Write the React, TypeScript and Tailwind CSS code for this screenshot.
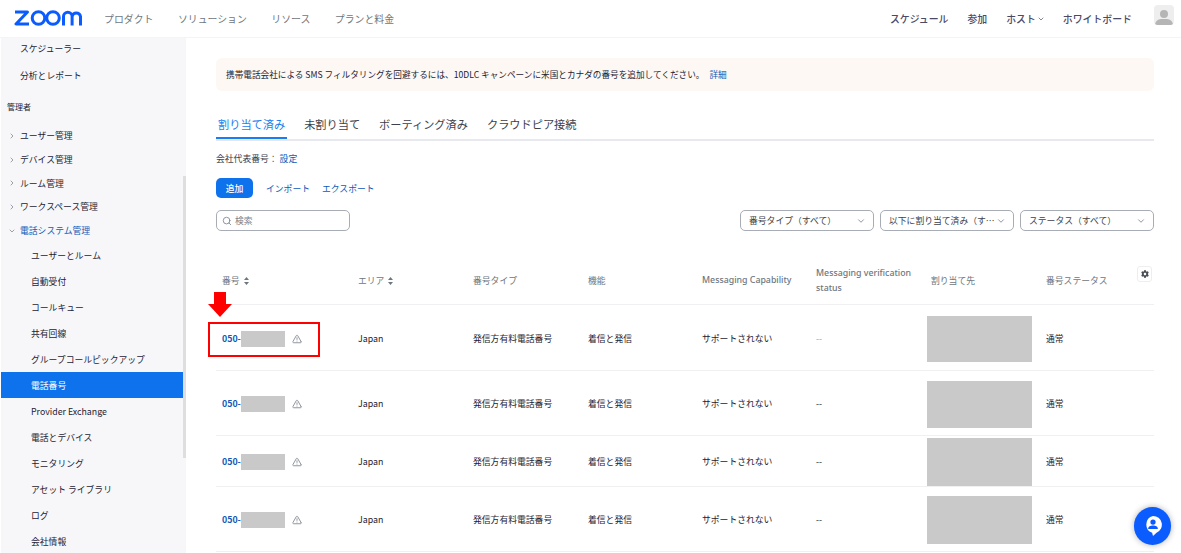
import { AlertTriangle, ChevronDown, ChevronRight, Search } from "lucide-react";
import { FaCog } from "react-icons/fa";

const jp = "font-['Noto_Sans_CJK_JP','Noto_Sans',sans-serif]";

const topLinks = ["プロダクト", "ソリューション", "リソース", "プランと料金"];

const rows = [
  { h: "h-[66px]", box: "h-[46px]", dash: "text-[#98a0a9]" },
  { h: "h-[65px]", box: "h-[47px]", dash: "text-[#131619]" },
  { h: "h-[51px]", box: "h-[48px]", dash: "text-[#131619]" },
  { h: "h-[65px]", box: "h-[48px]", dash: "text-[#131619]" },
];

const cols = "grid grid-cols-[136px_115px_115px_114px_114px_115px_115px_1fr]";

function ZoomLogo() {
  return (
    <svg width="68" height="16" viewBox="0 0 68 16" fill="none" stroke="#0b5cff" strokeWidth="3" className="-mt-[1px]">
      <path d="M1 2h12.500L2 14h13" strokeLinejoin="round" />
      <circle cx="24.500" cy="8" r="6.300" />
      <circle cx="39" cy="8" r="6.300" />
      <path d="M49.500 15.500V6.500a4.300 4.300 0 0 1 8.600 0v9M58.100 6.500a4.300 4.300 0 0 1 8.400 0v9" />
    </svg>
  );
}

function SortCarets() {
  return (
    <svg width="5" height="8" viewBox="0 0 5 8" fill="#6e7680" className="ml-[4px]">
      <path d="M2.500 0L5 3H0zM2.500 8L0 5h5z" />
    </svg>
  );
}

function Side({ label, active = false }: { label: string; active?: boolean }) {
  return (
    <div className={`flex h-[26px] items-center pl-[30px] ${active ? "bg-[#0e72ed] text-white" : "text-[#232333]"}`}>
      {label}
    </div>
  );
}

function Group({ label, open = false }: { label: string; open?: boolean }) {
  return (
    <div className={`flex h-[23.7px] items-center pl-[7px] ${open ? "text-[#0e5ab8]" : "text-[#232333]"}`}>
      {open ? (
        <ChevronDown size={8} className="mr-[4px] text-[#6e7680]" />
      ) : (
        <ChevronRight size={8} className="mr-[4px] text-[#6e7680]" />
      )}
      {label}
    </div>
  );
}

function Picker({ label }: { label: string }) {
  return (
    <div className="flex h-[21px] w-[134px] items-center justify-between rounded-[5px] border border-[#a8adb5] pl-[8px] pr-[7px] whitespace-nowrap text-[#3d424a]">
      <span>{label}</span>
      <ChevronDown size={10} className="shrink-0 text-[#7b828b]" />
    </div>
  );
}

export default function App() {
  return (
    <div className={`relative h-[553px] w-[1181px] overflow-hidden bg-white text-[8.8px] ${jp}`}>
      <header className="flex h-[38px] items-center justify-between border-b border-[#f4f4f6] pl-[14px] pr-[7px]">
        <div className="flex items-center">
          <ZoomLogo />
          <nav className="mt-[1px] ml-[22px] flex gap-[24.500px] text-[9.900px] text-[#6e7680]">
            {topLinks.map((link) => (
              <span key={link}>{link}</span>
            ))}
          </nav>
        </div>
        <div className="flex items-center text-[9.900px] font-medium text-[#4a4a68]">
          <span className="mt-[1px]">スケジュール</span>
          <span className="mt-[1px] ml-[19px]">参加</span>
          <span className="mt-[1px] ml-[19px] flex items-center">
            ホスト
            <ChevronDown size={8} className="ml-[1px]" />
          </span>
          <span className="mt-[1px] ml-[18px]">ホワイトボード</span>
          <div className="-mt-[6px] ml-[22px] flex h-[20px] w-[20px] flex-col items-center justify-end overflow-hidden rounded-[4px] bg-[#eeeeee]">
            <div className="h-[8px] w-[8px] rounded-full bg-[#b5b5b5]" />
            <div className="mt-[1px] h-[6px] w-[18px] rounded-t-[6px] bg-[#b5b5b5]" />
          </div>
        </div>
      </header>

      <div className="flex">
        <aside className="relative ml-[1px] h-[515px] w-[185px] shrink-0 bg-[#f7f7fa] pt-[1px]">
          <div className="flex h-[20px] items-center pl-[19px] text-[#232333]">スケジューラー</div>
          <div className="flex h-[34px] items-center pl-[19px] text-[#232333]">分析とレポート</div>
          <div className="flex h-[28px] items-center pl-[6px] text-[8px] text-[#232333]">管理者</div>
          <div className="h-[3px]" />
          <Group label="ユーザー管理" />
          <Group label="デバイス管理" />
          <Group label="ルーム管理" />
          <Group label="ワークスペース管理" />
          <Group label="電話システム管理" open />
          {["ユーザーとルーム", "自動受付", "コールキュー", "共有回線", "グループコールピックアップ"].map((label) => (
            <Side key={label} label={label} />
          ))}
          <Side label="電話番号" active />
          {["Provider Exchange", "電話とデバイス", "モニタリング", "アセット ライブラリ", "ログ", "会社情報"].map((label) => (
            <Side key={label} label={label} />
          ))}
          <div className="absolute right-0 top-[138px] h-[282px] w-[3px] bg-[#dedede]" />
        </aside>

        <main className="ml-[30px] w-[938px] pt-[20px]">
          <div className="flex h-[33px] items-center rounded-[6px] bg-[#fdf8f3] pl-[10px] text-[8.650px] text-[#232333]">
            携帯電話会社による SMS フィルタリングを回避するには、10DLC キャンペーンに米国とカナダの番号を追加してください。
            <span className="ml-[5px] text-[#0e5ab8]">詳細</span>
          </div>

          <div className="mt-[20px] flex h-[30px] items-start gap-[19px] border-b-2 border-[#e8e9ee] px-[2px] text-[11.200px] leading-[26px] text-[#3d424a]">
            <span className="relative text-[#1a7ef0]">
              割り当て済み
              <span className="absolute -bottom-[2px] -left-[2px] -right-[2px] h-[2px] bg-[#1a7ef0]" />
            </span>
            <span>未割り当て</span>
            <span>ボーティング済み</span>
            <span>クラウドピア接続</span>
          </div>

          <div className="mt-[10px] flex h-[16px] items-center text-[#3d424a]">
            会社代表番号：
            <span className="ml-[2px] text-[#0e5ab8]">設定</span>
          </div>

          <div className="mt-[11px] flex items-center text-[#0e5ab8]">
            <button className="flex h-[20px] w-[37px] items-center justify-center rounded-[5px] bg-[#0e72ed] pt-[1px] font-medium text-white">
              追加
            </button>
            <span className="mt-[1px] ml-[13px]">インポート</span>
            <span className="mt-[1px] ml-[12px]">エクスポート</span>
          </div>

          <div className="mt-[12px] flex items-center justify-between">
            <div className="flex h-[21px] w-[134px] items-center gap-[3px] rounded-[5px] border border-[#a8adb5] pl-[5px] text-[#7b828b]">
              <Search size={10} />
              検索
            </div>
            <div className="flex gap-[6px]">
              <Picker label="番号タイプ（すべて）" />
              <Picker label="以下に割り当て済み（す…" />
              <Picker label="ステータス（すべて）" />
            </div>
          </div>

          <div className={`relative mt-[32px] h-[42px] items-center border-b border-[#f0f0f3] pb-[6px] text-[#6e7680] ${cols}`}>
            <span className="flex items-center pl-[6px]">
              番号
              <SortCarets />
            </span>
            <span className="flex items-center pl-[6px]">
              エリア
              <SortCarets />
            </span>
            <span className="pl-[6px]">番号タイプ</span>
            <span className="pl-[6px]">機能</span>
            <span className="pl-[6px] font-['Noto_Sans',sans-serif] font-medium">Messaging Capability</span>
            <span className="pl-[6px] font-['Noto_Sans',sans-serif] font-medium leading-[15px]">
              Messaging verification status
            </span>
            <span className="pl-[6px]">割り当て先</span>
            <span className="pl-[6px]">番号ステータス</span>
            <span className="absolute right-[2px] top-[3px] flex h-[16px] w-[15px] items-center justify-center rounded-[3px] border border-[#eeeeee] bg-white">
              <FaCog size={8} className="text-[#4a4f57]" />
            </span>
          </div>

          {rows.map((row, i) => (
            <div key={i} className={`items-center border-b border-[#f0f0f3] pt-[2px] text-[#232333] ${row.h} ${cols}`}>
              <span className="flex items-center pl-[6px]">
                <span className="font-semibold text-[#0e5ab8]">050-</span>
                <span className="h-[16px] w-[44px] bg-[#c9c9c9]" />
                <AlertTriangle size={10} className="ml-[7px] text-[#7b828b]" />
              </span>
              <span className="pl-[6px]">Japan</span>
              <span className="pl-[6px]">発信方有料電話番号</span>
              <span className="pl-[6px]">着信と発信</span>
              <span className="pl-[6px]">サポートされない</span>
              <span className={`pl-[6px] ${row.dash}`}>--</span>
              <span className="flex items-center pl-[2px]">
                <span className={`block w-[105px] bg-[#c9c9c9] ${row.box}`} />
              </span>
              <span className="pl-[6px]">通常</span>
            </div>
          ))}
        </main>
      </div>

      {/* annotations laid over the screenshot */}
      <div className="absolute left-[208px] top-[322px] h-[35px] w-[112px] border-2 border-[#ff0000]" />
      <svg className="absolute left-[208px] top-[292px]" width="24" height="25" viewBox="0 0 24 25">
        <path d="M6 0h12v12h6L12 25 0 12h6z" fill="#ff0000" />
      </svg>
      <div className="absolute left-[1134px] top-[507px] flex h-[38px] w-[37px] items-center justify-center rounded-full bg-[#0b5cff] shadow-[0_0_6px_rgba(0,0,0,0.3)]">
        <svg width="20" height="22" viewBox="0 0 22 25">
          <path d="M11 1a10 10 0 0 1 4 19.200L11 24l-1-3.900A10 10 0 0 1 11 1z" fill="#fff" />
          <circle cx="11" cy="8" r="3" fill="#0b5cff" />
          <path d="M5.500 16c0-3 2.500-4 5.500-4s5.500 1 5.500 4z" fill="#0b5cff" />
        </svg>
      </div>
    </div>
  );
}
